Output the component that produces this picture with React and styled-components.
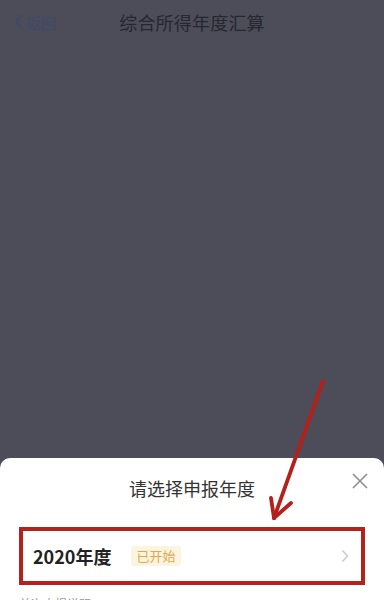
import React from 'react';
import styled, { createGlobalStyle } from 'styled-components';

const GlobalStyle = createGlobalStyle`
  html, body {
    margin: 0;
    padding: 0;
    background: #4c4d58;
  }
  body {
    font-family: "Noto Sans CJK SC", "Noto Sans", sans-serif;
  }
`;

const Screen = styled.div`
  position: relative;
  width: 384px;
  height: 600px;
  overflow: hidden;
  display: flex;
  flex-direction: column;
  background: #4c4d58;
`;

const NavBar = styled.div`
  position: relative;
  height: 44px;
  display: flex;
  align-items: center;
  justify-content: center;
  flex-shrink: 0;
`;

const BackButton = styled.div`
  position: absolute;
  left: 14px;
  top: 0;
  height: 44px;
  display: flex;
  align-items: center;
  gap: 2px;
  color: #3d4c6c;
  font-size: 15px;
`;

const NavTitle = styled.div`
  font-size: 18px;
  color: #262731;
  letter-spacing: 0.2px;
`;

const Spacer = styled.div`
  flex: 1;
`;

const Sheet = styled.div`
  height: 142px;
  flex-shrink: 0;
  background: #ffffff;
  border-radius: 10px 10px 0 0;
  padding: 0 19px;
  display: flex;
  flex-direction: column;
  overflow: hidden;
`;

const SheetHeader = styled.div`
  position: relative;
  height: 60px;
  flex-shrink: 0;
  display: flex;
  align-items: center;
  justify-content: center;
`;

const SheetTitle = styled.div`
  font-size: 18px;
  color: #333333;
`;

const Close = styled.div`
  position: absolute;
  right: -4px;
  top: 14px;
  width: 18px;
  height: 18px;
  display: flex;
`;

const YearRow = styled.div`
  margin-top: 9px;
  height: 50px;
  flex-shrink: 0;
  border: 4px solid #b3221c;
  display: flex;
  align-items: center;
  padding: 0 12px 0 10px;
`;

const YearLabel = styled.div`
  font-size: 18px;
  font-weight: 700;
  color: #222222;
`;

const Badge = styled.span`
  margin-left: 20px;
  padding: 1px 5px;
  background: #fdf4e0;
  color: #e2a74c;
  font-size: 13px;
  border-radius: 3px;
  line-height: 18px;
`;

const Chevron = styled.div`
  margin-left: auto;
  display: flex;
`;

const FooterHint = styled.div`
  margin-top: 10px;
  font-size: 12px;
  color: #999999;
  flex-shrink: 0;
`;

const ArrowLayer = styled.svg`
  position: absolute;
  left: 0;
  top: 0;
  pointer-events: none;
`;

export default function App() {
  return (
    <>
      <GlobalStyle />
      <Screen>
        <NavBar>
          <BackButton>
            <svg width="10" height="18" viewBox="0 0 10 18">
              <path d="M8 2 L2 9 L8 16" fill="none" stroke="#3d4c6c" strokeWidth="1.6" />
            </svg>
            返回
          </BackButton>
          <NavTitle>综合所得年度汇算</NavTitle>
        </NavBar>
        <Spacer />
        <Sheet>
          <SheetHeader>
            <SheetTitle>请选择申报年度</SheetTitle>
            <Close>
              <svg width="18" height="18" viewBox="0 0 18 18">
                <path d="M2 2 L16 16 M16 2 L2 16" stroke="#8e8e8e" strokeWidth="1.6" />
              </svg>
            </Close>
          </SheetHeader>
          <YearRow>
            <YearLabel>2020年度</YearLabel>
            <Badge>已开始</Badge>
            <Chevron>
              <svg width="8" height="14" viewBox="0 0 8 14">
                <path d="M1.5 1.5 L6.5 7 L1.5 12.5" fill="none" stroke="#c8c8c8" strokeWidth="1.4" />
              </svg>
            </Chevron>
          </YearRow>
          <FooterHint>首次申报说明</FooterHint>
        </Sheet>
        <ArrowLayer width="384" height="600" viewBox="0 0 384 600">
          <g stroke="#b4201c" strokeWidth="3.8" strokeLinecap="round" fill="none">
            <path d="M323 381 L274 518" />
            <path d="M274 518 L271 498" />
            <path d="M274 518 L291 503" />
          </g>
        </ArrowLayer>
      </Screen>
    </>
  );
}
